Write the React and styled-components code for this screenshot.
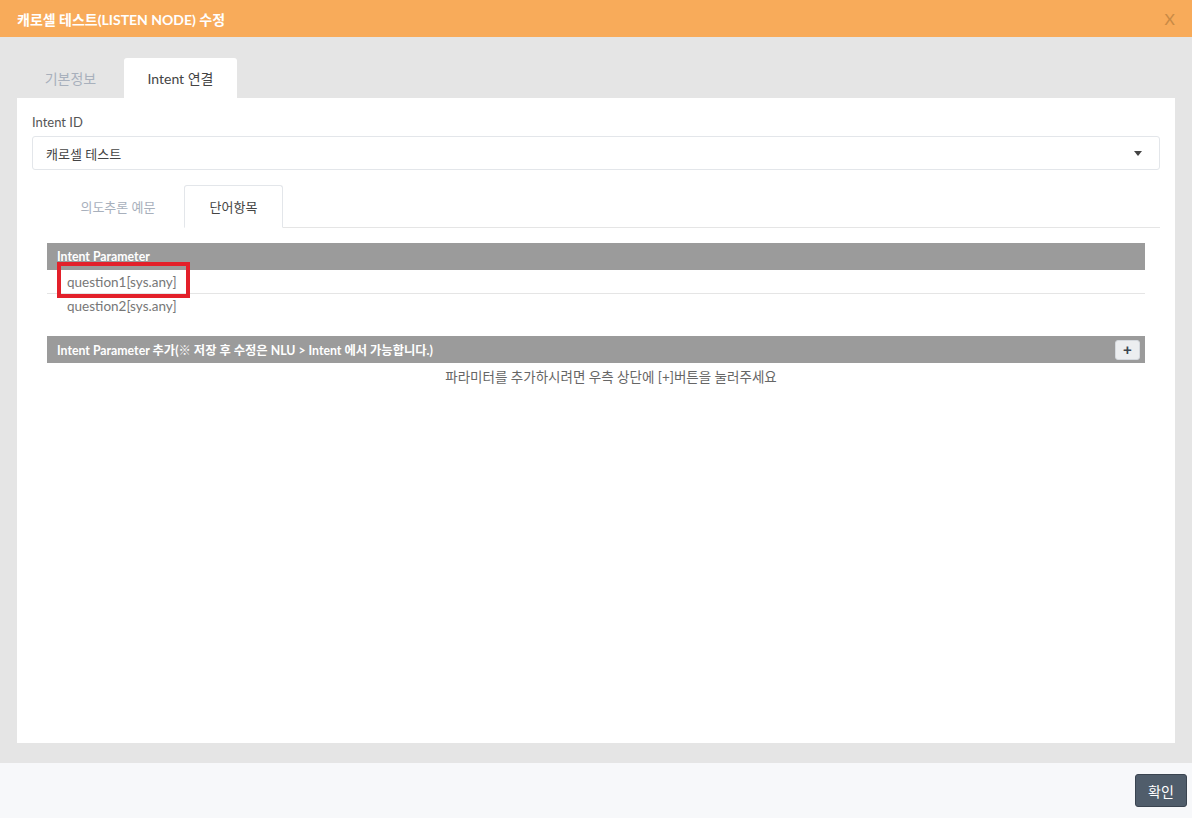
import React from "react";
import styled, { createGlobalStyle } from "styled-components";

const GlobalStyle = createGlobalStyle`
  html, body {
    margin: 0;
    padding: 0;
    background: #ffffff;
  }
  body {
    font-family: Lato, "Noto Sans CJK KR", sans-serif;
    font-size: 13px;
    color: #555;
  }
`;

const Modal = styled.div`
  width: 1192px;
  height: 818px;
  display: flex;
  flex-direction: column;
`;

const Header = styled.div`
  height: 37px;
  background: #f8ab5a;
  display: flex;
  align-items: center;
  justify-content: space-between;
  padding: 0 17px;
  box-sizing: border-box;
`;

const Title = styled.h1`
  margin: 0;
  font-size: 14px;
  font-weight: 700;
  color: #ffffff;
`;

const Close = styled.span`
  font-size: 16px;
  color: #c98a45;
  margin-right: 0;
`;

const Body = styled.div`
  flex: 1;
  background: #e5e5e5;
  padding: 21px 17px 20px;
  display: flex;
  flex-direction: column;
`;

const TabBar = styled.div`
  display: flex;
  height: 40px;
`;

const Tab = styled.div`
  width: ${(p) => p.$w}px;
  display: flex;
  align-items: center;
  justify-content: center;
  font-size: 14px;
  border-radius: 3px 3px 0 0;
  background: ${(p) => (p.$active ? "#ffffff" : "transparent")};
  color: ${(p) => (p.$active ? "#444" : "#a8b0bc")};
`;

const Panel = styled.div`
  flex: 1;
  background: #ffffff;
  padding: 16px 15px 0;
`;

const Label = styled.div`
  font-size: 13px;
  color: #555;
  line-height: 16px;
  margin-bottom: 6px;
`;

const Select = styled.div`
  height: 34px;
  border: 1px solid #e3e6ea;
  border-radius: 3px;
  box-sizing: border-box;
  display: flex;
  align-items: center;
  justify-content: space-between;
  padding: 0 13px;
  font-size: 13px;
  color: #444;
`;

const Caret = styled.span`
  width: 0;
  height: 0;
  border-left: 4px solid transparent;
  border-right: 4px solid transparent;
  border-top: 5px solid #444;
  margin-right: 4px;
`;

const SubTabBar = styled.div`
  display: flex;
  margin-top: 15px;
  height: 42px;
  border-bottom: 1px solid #e5e5e5;
`;

const SubTab = styled.div`
  width: ${(p) => p.$w}px;
  display: flex;
  align-items: center;
  justify-content: center;
  padding-left: ${(p) => (p.$active ? 0 : 20)}px;
  font-size: 13px;
  box-sizing: border-box;
  border-radius: 3px 3px 0 0;
  margin-bottom: -1px;
  border: 1px solid ${(p) => (p.$active ? "#e3e6ea" : "transparent")};
  border-bottom-color: ${(p) => (p.$active ? "#ffffff" : "transparent")};
  background: #ffffff;
  color: ${(p) => (p.$active ? "#444" : "#a8b0bc")};
`;

const Section = styled.div`
  margin: ${(p) => p.$top}px 15px 0;
`;

const TableHead = styled.div`
  height: 27px;
  background: #9b9b9b;
  color: #ffffff;
  font-size: 12.3px;
  font-weight: 700;
  display: flex;
  align-items: center;
  justify-content: space-between;
  padding: 0 5px 0 10px;
`;

const Row = styled.div`
  position: relative;
  height: 23px;
  display: flex;
  align-items: center;
  padding-left: 20px;
  font-size: 13.5px;
  color: #777;
  border-bottom: 1px solid ${(p) => (p.$last ? "transparent" : "#e5e5e5")};
`;

const Highlight = styled.div`
  position: absolute;
  left: 10px;
  top: -8px;
  width: 133px;
  height: 36px;
  border: 4px solid #e3202a;
  box-sizing: border-box;
`;

const AddButton = styled.button`
  width: 25px;
  height: 20px;
  border: 1px solid #d5d9de;
  border-radius: 3px;
  background: #eceef0;
  color: #3d4650;
  font-size: 15px;
  font-weight: 700;
  line-height: 1;
  padding: 0;
  display: flex;
  align-items: center;
  justify-content: center;
`;

const Hint = styled.div`
  text-align: center;
  font-size: 13.5px;
  color: #666;
  padding: 3px 0 0 30px;
`;

const Footer = styled.div`
  height: 55px;
  background: #f7f8fa;
  display: flex;
  align-items: center;
  justify-content: flex-end;
  padding: 0 5px;
`;

const ConfirmButton = styled.button`
  width: 52px;
  height: 33px;
  background: #505d6b;
  border: 1px solid #3a4450;
  border-radius: 3px;
  color: #ffffff;
  font-family: "Noto Sans CJK KR", sans-serif;
  font-size: 14px;
  padding: 0;
`;

export default function App() {
  return (
    <Modal>
      <GlobalStyle />
      <Header>
        <Title>캐로셀 테스트(LISTEN NODE) 수정</Title>
        <Close>X</Close>
      </Header>
      <Body>
        <TabBar>
          <Tab $w={107}>기본정보</Tab>
          <Tab $w={113} $active>
            Intent 연결
          </Tab>
        </TabBar>
        <Panel>
          <Label>Intent ID</Label>
          <Select>
            <span>캐로셀 테스트</span>
            <Caret />
          </Select>
          <SubTabBar>
            <SubTab $w={152}>의도추론 예문</SubTab>
            <SubTab $w={99} $active>
              단어항목
            </SubTab>
          </SubTabBar>
          <Section $top={15}>
            <TableHead>Intent Parameter</TableHead>
            <Row>
              question1[sys.any]
              <Highlight />
            </Row>
            <Row $last>question2[sys.any]</Row>
          </Section>
          <Section $top={18}>
            <TableHead>
              Intent Parameter 추가(※ 저장 후 수정은 NLU &gt; Intent 에서 가능합니다.)
              <AddButton>+</AddButton>
            </TableHead>
            <Hint>파라미터를 추가하시려면 우측 상단에 [+]버튼을 눌러주세요</Hint>
          </Section>
        </Panel>
      </Body>
      <Footer>
        <ConfirmButton>확인</ConfirmButton>
      </Footer>
    </Modal>
  );
}
